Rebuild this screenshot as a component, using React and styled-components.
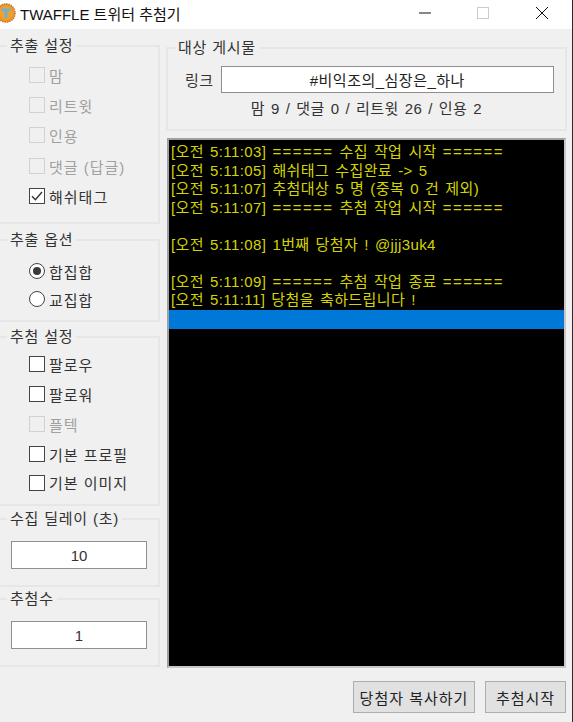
import React from "react";
import styled, { createGlobalStyle } from "styled-components";

const Global = createGlobalStyle`
  html, body { margin: 0; padding: 0; background: #f0f0f0; }
  * { box-sizing: border-box; }
`;

const MIX = `"Liberation Sans", "Noto Sans CJK KR", sans-serif`;

const Win = styled.div`
  width: 573px;
  height: 722px;
  overflow: hidden;
  background: #f0f0f0;
  border-right: 1px solid #2a2a2a;
  font-family: ${MIX};
  font-size: 15px;
  color: #333;
  display: flex;
  flex-direction: column;
`;
const TitleBar = styled.div`
  height: 29px;
  flex: none;
  background: #fff;
  display: flex;
  align-items: center;
  padding: 0 23px 3px 0;
`;
const Title = styled.span`
  margin-left: 4px;
  flex: 1;
  font-size: 15px;
  color: #111;
  white-space: nowrap;
`;
const WinBtn = styled.svg`
  width: 14px;
  height: 14px;
  margin-left: ${p => p.$gap || 0}px;
  flex: none;
`;
const Body = styled.div`
  flex: 1;
  display: grid;
  grid-template-columns: 160px 1fr;
  column-gap: 6px;
  padding: 0 5px 0 0;
  min-height: 0;
`;
const Side = styled.div`
  display: flex;
  flex-direction: column;
  padding-top: 8px;
`;
const Frame = styled.fieldset`
  margin: 0 0 ${p => p.$after}px 0;
  padding: 0;
  height: ${p => p.$h}px;
  border: 2px solid #e6e6e6;
  border-left: ${p => (p.$left ? "2px solid #e6e6e6" : "none")};
  min-width: 0;
  position: relative;
`;
const Legend = styled.legend`
  padding: 0 3px;
  margin-left: ${p => p.$ml}px;
  font-size: 15px;
  line-height: 18px;
  color: #333;
  letter-spacing: 0.8px;
  white-space: nowrap;
`;
const OptList = styled.div`
  display: flex;
  flex-direction: column;
  padding: ${p => p.$top}px 0 0 29px;
`;
const Opt = styled.div`
  height: ${p => p.$h}px;
  display: flex;
  align-items: center;
  gap: 4px;
  font-size: 15px;
  letter-spacing: 1px;
  color: ${p => (p.$off ? "#a0a0a0" : "#333")};
  white-space: nowrap;
`;
const CheckBox = styled.span`
  width: 16px;
  height: 16px;
  flex: none;
  background: ${p => (p.$off ? "#f0f0f0" : "#fff")};
  border: 1.5px solid ${p => (p.$off ? "#d2d2d2" : "#444")};
  display: flex;
  align-items: center;
  justify-content: center;
`;
const Radio = styled.span`
  width: 16px;
  height: 16px;
  flex: none;
  border-radius: 50%;
  background: #fff;
  border: 1.5px solid #444;
  display: flex;
  align-items: center;
  justify-content: center;
`;
const RadioDot = styled.span`
  width: 8px;
  height: 8px;
  border-radius: 50%;
  background: #3a3a3a;
`;
const NumRow = styled.div`
  padding: 13px 0 0 11px;
`;
const NumBox = styled.div`
  width: 136px;
  height: 28px;
  background: #fff;
  border: 1.5px solid #8f8f8f;
  display: flex;
  align-items: center;
  justify-content: center;
  font-size: 15px;
  color: #333;
`;
const Main = styled.div`
  display: flex;
  flex-direction: column;
  padding-top: 10px;
  min-width: 0;
`;
const TargetFrame = styled(Frame)`
  margin-left: 0;
  flex: none;
`;
const LinkRow = styled.div`
  display: flex;
  align-items: center;
  padding: 9px 11px 0 17px;
  gap: 7px;
  font-size: 15px;
  letter-spacing: 0.5px;
  color: #333;
`;
const LinkBox = styled.div`
  flex: 1;
  height: 27px;
  background: #fff;
  border: 1.5px solid #8f8f8f;
  display: flex;
  align-items: center;
  justify-content: center;
  color: #222;
`;
const Stats = styled.div`
  text-align: center;
  margin-top: 7px;
  font-size: 15px;
  line-height: 18px;
  letter-spacing: 0.5px;
  word-spacing: 1.2px;
  color: #333;
`;
const Log = styled.div`
  margin: 7px 0 0 1px;
  width: 399px;
  height: 530px;
  flex: none;
  background: #000;
  border: 2px solid #a0a0a0;
  border-right-color: #c8c8c8;
  border-bottom-color: #c8c8c8;
  padding-top: 3px;
  font-size: 15px;
  letter-spacing: 0.4px;
  word-spacing: 1.5px;
  color: #d4d400;
  overflow: hidden;
`;
const LogLine = styled.div`
  height: 18.5px;
  line-height: 18.5px;
  padding-left: 2px;
  white-space: nowrap;
`;
const LogRule = styled.span`
  letter-spacing: 1.4px;
`;
const LogSelected = styled.div`
  height: 19px;
  background: #0078d7;
`;
const Actions = styled.div`
  display: flex;
  justify-content: flex-end;
  gap: 10px;
  margin-top: 13px;
  padding-right: 1px;
`;
const Btn = styled.button`
  width: ${p => p.$w}px;
  height: 32px;
  padding: 0;
  background: #e1e1e1;
  border: 1.5px solid #adadad;
  border-radius: 0;
  font-family: ${MIX};
  font-size: 15px;
  letter-spacing: 1px;
  color: #222;
`;

const Check = ({ label, off, checked }) => (
  <>
    <CheckBox $off={off}>
      {checked && (
        <svg width="12" height="12" viewBox="0 0 12 12">
          <path d="M1 6.2 L4.4 9.8 L11 2" fill="none" stroke="#333" strokeWidth="1.4" />
        </svg>
      )}
    </CheckBox>
    {label}
  </>
);

const Logo = () => (
  <svg width="20" height="20" viewBox="0 0 20 20" style={{ marginLeft: "-4px", flex: "none" }}>
    <circle cx="10" cy="10" r="9.2" fill="#e8962e" stroke="#b9702a" strokeWidth="1.2" strokeDasharray="1.4 1" />
    <circle cx="10" cy="10" r="6.8" fill="#f0a030" />
    <path d="M5.5 5.5H14.5V8H11.3V15H8.7V8H5.5Z" fill="#5fb6dc" />
  </svg>
);

const logLines = [
  "[오전 5:11:03] ====== 수집 작업 시작 ======",
  "[오전 5:11:05] 해쉬태그 수집완료 -> 5",
  "[오전 5:11:07] 추첨대상 5 명 (중복 0 건 제외)",
  "[오전 5:11:07] ====== 추첨 작업 시작 ======",
  "",
  "[오전 5:11:08] 1번째 당첨자 ! @jjj3uk4",
  "",
  "[오전 5:11:09] ====== 추첨 작업 종료 ======",
  "[오전 5:11:11] 당첨을 축하드립니다 !",
];

export default function App() {
  return (
    <Win>
      <Global />
      <TitleBar>
        <Logo />
        <Title>TWAFFLE 트위터 추첨기</Title>
        <WinBtn viewBox="0 0 14 14">
          <path d="M1 7H13" stroke="#111" strokeWidth="1" />
        </WinBtn>
        <WinBtn viewBox="0 0 14 14" $gap={44}>
          <rect x="1.5" y="1.5" width="11" height="11" fill="none" stroke="#ccc" strokeWidth="1" />
        </WinBtn>
        <WinBtn viewBox="0 0 14 14" $gap={45}>
          <path d="M1 1L13 13M13 1L1 13" stroke="#111" strokeWidth="1" />
        </WinBtn>
      </TitleBar>
      <Body>
        <Side>
          <Frame $h={187} $after={7}>
            <Legend $ml={7}>추출 설정</Legend>
            <OptList $top={5}>
              <Opt $h={30} $off><Check off label="맘" /></Opt>
              <Opt $h={30} $off><Check off label="리트윗" /></Opt>
              <Opt $h={30} $off><Check off label="인용" /></Opt>
              <Opt $h={32} $off><Check off label="댓글 (답글)" /></Opt>
              <Opt $h={28}><Check checked label="해쉬태그" /></Opt>
            </OptList>
          </Frame>
          <Frame $h={91} $after={6}>
            <Legend $ml={7}>추출 옵션</Legend>
            <OptList $top={8}>
              <Opt $h={28}><Radio><RadioDot /></Radio>합집합</Opt>
              <Opt $h={28}><Radio />교집합</Opt>
            </OptList>
          </Frame>
          <Frame $h={178} $after={4}>
            <Legend $ml={7}>추첨 설정</Legend>
            <OptList $top={3}>
              <Opt $h={30}><Check label="팔로우" /></Opt>
              <Opt $h={30}><Check label="팔로워" /></Opt>
              <Opt $h={30} $off><Check off label="플텍" /></Opt>
              <Opt $h={30}><Check label="기본 프로필" /></Opt>
              <Opt $h={27}><Check label="기본 이미지" /></Opt>
            </OptList>
          </Frame>
          <Frame $h={77} $after={3}>
            <Legend $ml={7}>수집 딜레이 (초)</Legend>
            <NumRow><NumBox>10</NumBox></NumRow>
          </Frame>
          <Frame $h={77} $after={0}>
            <Legend $ml={7}>추첨수</Legend>
            <NumRow><NumBox>1</NumBox></NumRow>
          </Frame>
        </Side>
        <Main>
          <TargetFrame $left $h={92} $after={0}>
            <Legend $ml={7}>대상 게시물</Legend>
            <LinkRow>
              링크
              <LinkBox>#비익조의_심장은_하나</LinkBox>
            </LinkRow>
            <Stats>맘 9 / 댓글 0 / 리트윗 26 / 인용 2</Stats>
          </TargetFrame>
          <Log>
            {logLines.map((line, i) => (
              <LogLine key={i}>
                {line.split(/(=+)/).map((part, j) =>
                  part.startsWith("=") ? <LogRule key={j}>{part}</LogRule> : part
                )}
              </LogLine>
            ))}
            <LogSelected />
          </Log>
          <Actions>
            <Btn $w={122}>당첨자 복사하기</Btn>
            <Btn $w={81}>추첨시작</Btn>
          </Actions>
        </Main>
      </Body>
    </Win>
  );
}
